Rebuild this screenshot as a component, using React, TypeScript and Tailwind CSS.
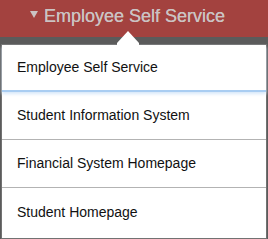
const items = [
  "Employee Self Service",
  "Student Information System",
  "Financial System Homepage",
  "Student Homepage",
];

export default function App() {
  return (
    <div className="relative flex h-[239px] w-[268px] flex-col overflow-hidden bg-[#5b5b5b] font-['Liberation_Sans',Arial,sans-serif]">
      <div className="flex h-[37px] shrink-0 items-center bg-[#a3423f] pl-[30px] pb-[4px] text-[18px] text-[#cbc3c3]">
        <svg className="mr-[6px] mb-[5px]" width="8" height="7" viewBox="0 0 8 7">
          <polygon points="0,0 8,0 4,7" fill="#cbc3c3" />
        </svg>
        <span className="[text-shadow:0_0_0.4px_#cbc3c3]">Employee Self Service</span>
      </div>

      <svg
        className="absolute left-[117px] top-[31px]"
        width="22"
        height="14"
        viewBox="0 0 22 14"
      >
        <polygon points="11,0 22,12 22,14 0,14 0,12" fill="#ffffff" />
      </svg>

      <div className="mt-[7px] ml-[1px] mr-[1px] flex flex-1 flex-col border border-[#727272] bg-white">
        {items.map((label, i) => (
          <div
            key={label}
            className={
              i === 0
                ? "flex h-[47px] items-center border-b-2 border-[#a9cdf2] pl-[15px] text-[14px] text-[#111] shadow-[0_2px_3px_#d7e8fa]"
                : i === items.length - 1
                  ? "flex flex-1 items-center pb-[2px] pl-[15px] text-[14px] text-[#111]"
                  : "flex h-[48px] items-center border-b border-[#b3b3b3] pl-[15px] text-[14px] text-[#111]"
            }
          >
            {label}
          </div>
        ))}
      </div>
    </div>
  );
}
